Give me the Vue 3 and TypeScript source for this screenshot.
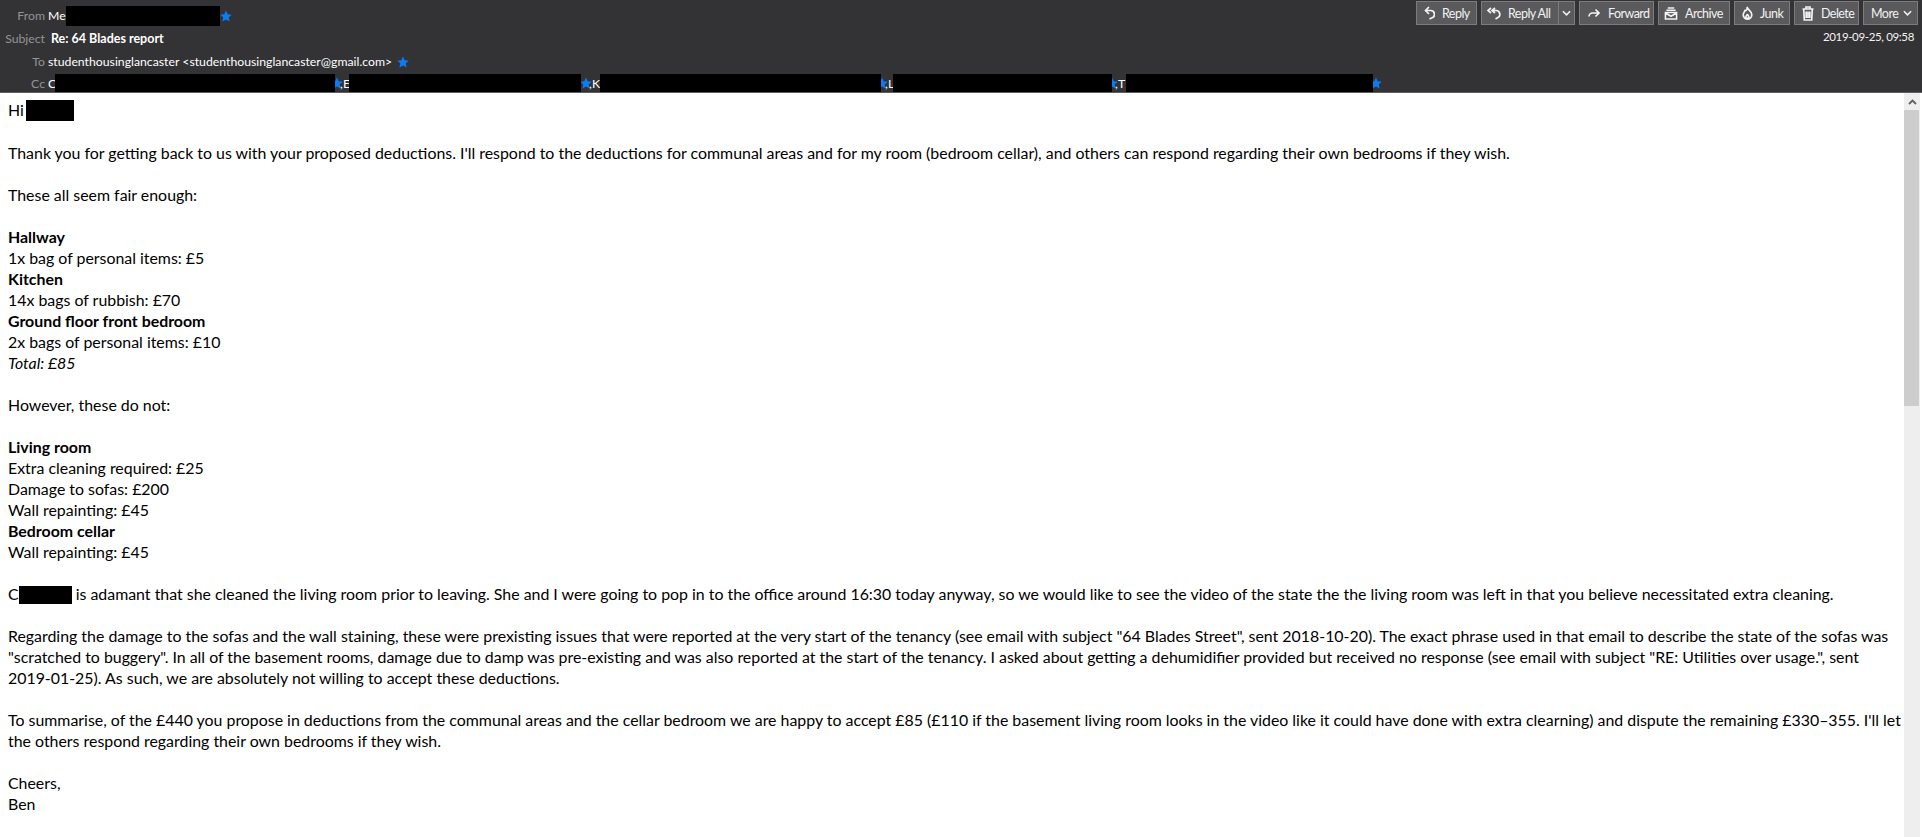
<template>
  <div class="mail">
    <header class="mail-header">
      <div class="toolbar">
        <button class="tb-btn btn-reply">
          <svg class="ico" viewBox="0 0 11 14"><path d="M5 1 1.500 4.500 5 8M2 4.500h4.500a3.800 3.800 0 0 1 1 7.500L5.500 13" /></svg>
          Reply
        </button>
        <div class="split">
          <button class="tb-btn btn-replyall">
            <svg class="ico ico-wide" viewBox="0 0 14 13"><path d="M4 1 1 3.500 4 6M8 1 5 3.500 8 6M6 3.500h3a3.800 3.800 0 0 1 1.500 7.300L8.500 12" /></svg>
            Reply All
          </button>
          <button class="tb-btn split-drop">
            <svg class="chev" viewBox="0 0 10 6"><path d="M1 1l4 4 4-4" /></svg>
          </button>
        </div>
        <button class="tb-btn btn-forward">
          <svg class="ico ico-wide" viewBox="0 0 13 13"><path d="M8 2.500 11.500 6 8 9.500M11 6H5a3.500 3.500 0 0 0-3.500 3.500" /></svg>
          Forward
        </button>
        <button class="tb-btn btn-archive">
          <svg class="ico ico-wide" viewBox="0 0 14 14"><path d="M3.500 1h7M2 3.500h10M1 6h12v7H1zM1 6.500 7 10l6-3.500" /></svg>
          Archive
        </button>
        <button class="tb-btn btn-junk">
          <svg class="ico" viewBox="0 0 11 14"><path d="M5 1c.5 2.500 4.800 4 4.800 7.800a4.300 4.300 0 0 1-8.600 0C1.200 7 2.500 6 3 4.500 4.500 5 5.500 3 5 1zM5.500 8c0 1.500 1.600 1.800 1.300 3.300-.2 1-2.600 1-2.900 0C3.600 10 5.200 9.500 5.500 8z" /></svg>
          Junk
        </button>
        <button class="tb-btn btn-delete">
          <svg class="ico ico-trash" viewBox="0 0 12 15"><path d="M.5 3h11M4 3V1h4v2M1.700 3l.6 11h7.400l.6-11M4.200 5.500v6.500M6 5.500v6.500M7.800 5.500v6.500" /></svg>
          Delete
        </button>
        <button class="tb-btn btn-more">
          More
          <svg class="chev" viewBox="0 0 10 6"><path d="M1 1l4 4 4-4" /></svg>
        </button>
      </div>

      <div class="row row-from">
        <span class="label">From</span>
        <span class="value me">Me</span>
        <span class="redact redact-from"></span>
        <svg class="star" viewBox="0 0 14 14"><path d="M7 .5l2 4.400 4.700.5-3.500 3.200 1 4.700L7 11l-4.200 2.300 1-4.700L.3 5.400 5 4.900z" /></svg>
      </div>

      <div class="row row-subject">
        <span class="label label-subject">Subject</span>
        <span class="subject">Re: 64 Blades report</span>
        <span class="date">2019-09-25, 09:58</span>
      </div>

      <div class="row row-to">
        <span class="label">To</span>
        <span class="value">studenthousinglancaster &lt;studenthousinglancaster@gmail.com&gt;</span>
        <svg class="star" viewBox="0 0 14 14"><path d="M7 .5l2 4.400 4.700.5-3.500 3.200 1 4.700L7 11l-4.200 2.300 1-4.700L.3 5.400 5 4.900z" /></svg>
      </div>

      <div class="row row-cc">
        <span class="label">Cc</span>
        <template v-for="(c, i) in ccList" :key="i">
          <span class="value cc-initial" :style="{ width: c.initialWidth + 'px' }">{{ c.initial }}</span>
          <span class="redact redact-cc" :style="{ width: c.width + 'px' }"></span>
          <svg class="star star-cc" viewBox="0 0 14 14" :style="{ marginLeft: c.starShift + 'px' }"><path d="M7 .5l2 4.400 4.700.5-3.500 3.200 1 4.700L7 11l-4.200 2.300 1-4.700L.3 5.400 5 4.900z" /></svg>
          <span v-if="i < ccList.length - 1" class="value comma">,</span>
        </template>
      </div>
    </header>

    <div class="mail-body">
      <main class="content">
        <p>Hi <span class="redact redact-name"></span></p>
        <p>Thank you for getting back to us with your proposed deductions. I'll respond to the deductions for communal areas and for my room (bedroom cellar), and others can respond regarding their own bedrooms if they wish.</p>
        <p>These all seem fair enough:</p>
        <p>
          <b>Hallway</b><br>
          1x bag of personal items: £5<br>
          <b>Kitchen</b><br>
          14x bags of rubbish: £70<br>
          <b>Ground floor front bedroom</b><br>
          2x bags of personal items: £10<br>
          <i>Total: £85</i>
        </p>
        <p>However, these do not:</p>
        <p>
          <b>Living room</b><br>
          Extra cleaning required: £25<br>
          Damage to sofas: £200<br>
          Wall repainting: £45<br>
          <b>Bedroom cellar</b><br>
          Wall repainting: £45
        </p>
        <p>C<span class="redact redact-c"></span> is adamant that she cleaned the living room prior to leaving. She and I were going to pop in to the office around 16:30 today anyway, so we would like to see the video of the state the the living room was left in that you believe necessitated extra cleaning.</p>
        <p>Regarding the damage to the sofas and the wall staining, these were prexisting issues that were reported at the very start of the tenancy (see email with subject "64 Blades Street", sent 2018-10-20). The exact phrase used in that email to describe the state of the sofas was "scratched to buggery". In all of the basement rooms, damage due to damp was pre-existing and was also reported at the start of the tenancy. I asked about getting a dehumidifier provided but received no response (see email with subject "RE: Utilities over usage.", sent 2019-01-25). As such, we are absolutely not willing to accept these deductions.</p>
        <p>To summarise, of the £440 you propose in deductions from the communal areas and the cellar bedroom we are happy to accept £85 (£110 if the basement living room looks in the video like it could have done with extra clearning) and dispute the remaining £330–355. I'll let the others respond regarding their own bedrooms if they wish.</p>
        <p>Cheers,<br>Ben</p>
      </main>
      <div class="scrollbar">
        <div class="sb-arrow">
          <svg viewBox="0 0 9 6"><path d="M1 5l3.500-3.500L8 5" /></svg>
        </div>
        <div class="sb-thumb"></div>
      </div>
    </div>
  </div>
</template>

<script setup lang="ts">
interface CcEntry {
  initial: string
  initialWidth: number
  width: number
  starShift: number
}

const ccList: CcEntry[] = [
  { initial: 'C', initialWidth: 7, width: 280, starShift: -4 },
  { initial: 'E', initialWidth: 6, width: 232, starShift: -1 },
  { initial: 'K', initialWidth: 8, width: 281, starShift: -5 },
  { initial: 'L', initialWidth: 5, width: 219, starShift: -6 },
  { initial: 'T', initialWidth: 8, width: 247, starShift: -3 }
]
</script>

<style>
html,
body {
  margin: 0;
  height: 100%;
  overflow: hidden;
  background: #fff;
}
</style>

<style scoped>
.mail {
  height: 837px;
  display: flex;
  flex-direction: column;
  font-family: Lato, "Open Sans", sans-serif;
}

.mail-header {
  position: relative;
  height: 93px;
  box-sizing: border-box;
  background-color: #333335;
  border-bottom: 1px solid #5f5f61;
  color: #fff;
  font-size: 12.250px;
}

.toolbar {
  position: absolute;
  top: 1px;
  right: 4px;
  display: flex;
  gap: 4px;
}

.tb-btn {
  display: flex;
  align-items: center;
  gap: 7px;
  height: 24px;
  padding: 0 0 0 7px;
  box-sizing: border-box;
  background-color: #5a5a5c;
  border: 1px solid #7c7c7e;
  color: #f2f2f2;
  font-family: inherit;
  font-size: 12.500px;
  letter-spacing: -0.55px;
  white-space: nowrap;
}

.btn-reply {
  width: 61px;
}

.btn-replyall {
  width: 78px;
  padding-left: 5px;
}

.btn-forward {
  width: 75px;
}

.btn-archive {
  width: 72px;
  padding-left: 5px;
}

.btn-junk {
  width: 56px;
}

.btn-delete {
  width: 65px;
}

.btn-more {
  width: 55px;
  gap: 5px;
}

.split {
  display: flex;
}

.split-drop {
  width: 17px;
  padding: 0 3px;
  margin-left: -1px;
}

.ico {
  width: 11px;
  height: 14px;
  flex-shrink: 0;
  fill: none;
  stroke: #f2f2f2;
  stroke-width: 1.700;
}

.ico-wide {
  width: 14px;
  height: 13px;
}

.ico-trash {
  width: 12px;
  height: 15px;
}

.chev {
  width: 9px;
  height: 6px;
  flex-shrink: 0;
  fill: none;
  stroke: #f2f2f2;
  stroke-width: 1.700;
}

.row {
  display: flex;
  align-items: center;
  white-space: nowrap;
}

.row-from {
  height: 31px;
}

.row-subject {
  height: 14px;
}

.row-to {
  height: 33px;
}

.row-cc {
  height: 10px;
}

.label {
  width: 45px;
  color: #949496;
  text-align: right;
  margin-right: 3px;
}

.label-subject {
  margin-right: 6px;
}

.subject {
  font-size: 12.500px;
  font-weight: 700;
}

.date {
  position: absolute;
  right: 8px;
  top: 30px;
  font-size: 11.500px;
  letter-spacing: -0.35px;
  color: #f2f2f2;
}

.redact {
  display: inline-block;
  position: relative;
  z-index: 1;
  background: #000;
}

.redact-from {
  width: 154px;
  height: 20px;
}

.star {
  width: 12px;
  height: 12px;
  flex-shrink: 0;
  fill: #0a7cf5;
}

.row-to .star {
  margin-left: 5px;
}

.comma {
  width: 3px;
  margin-left: -3px;
  position: relative;
}

.redact-cc {
  height: 18px;
  flex-shrink: 0;
}

.mail-body {
  flex: 1;
  min-height: 0;
  display: flex;
  background: #fff;
}

.content {
  flex: 1;
  min-width: 0;
  padding: 6px 0 0 8px;
  color: #000;
  font-size: 15.900px;
  line-height: 21px;
}

.content p {
  margin: 0 0 21px;
}

.redact-name {
  width: 48px;
  height: 21px;
  margin-left: -2px;
  vertical-align: -5px;
}

.redact-c {
  width: 53px;
  height: 18px;
  vertical-align: -4px;
}

.scrollbar {
  width: 16px;
  margin-right: 2px;
  background: #eeeeee;
  flex-shrink: 0;
}

.sb-arrow {
  height: 17px;
  display: flex;
  align-items: center;
  justify-content: center;
}

.sb-arrow svg {
  width: 9px;
  height: 6px;
  fill: none;
  stroke: #606060;
  stroke-width: 1.800;
}

.sb-thumb {
  height: 296px;
  width: 15px;
  background: #cdcdcd;
}
</style>
